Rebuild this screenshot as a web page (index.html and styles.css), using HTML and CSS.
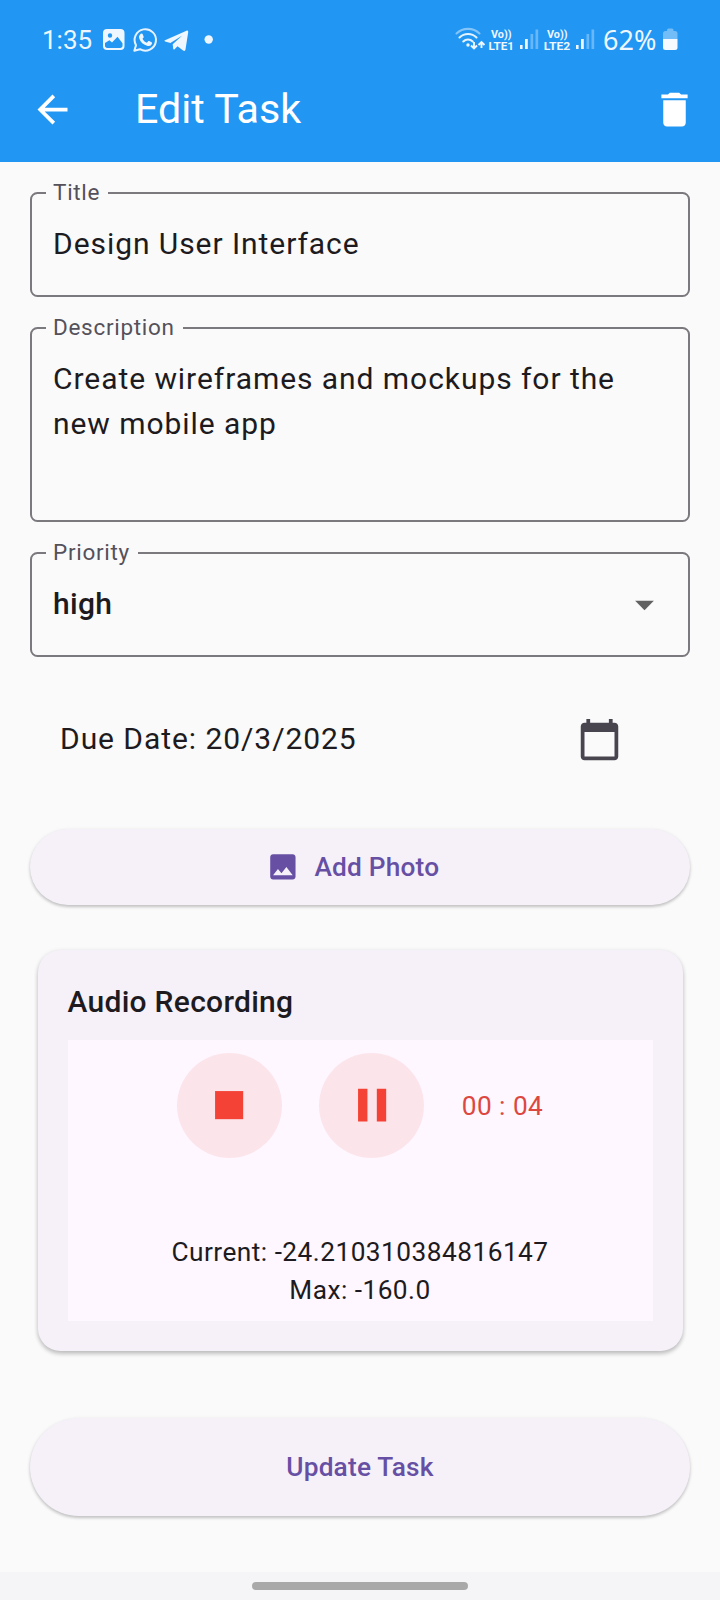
FILE: index.html
```html
<!DOCTYPE html>
<html lang="en">
<head>
<meta charset="utf-8">
<title>Edit Task</title>
<link rel="stylesheet" href="styles.css">
</head>
<body>
<div class="screen">
  <header class="top">
    <div class="status">
      <span class="status-text clock">1:35</span>
      <svg class="notif" width="112" height="28" viewBox="102 26 112 28">
        <path fill="#eef7ff" fill-rule="evenodd" d="M107 29h13.500a4 4 0 0 1 4 4v13a4 4 0 0 1-4 4H107a4 4 0 0 1-4-4V33a4 4 0 0 1 4-4zM105 43v2.800c0 1.300 1 2.200 2.200 2.200h13c1.300 0 2.300-.9 2.300-2.200v-2.600l-5-6.400-5.500 5.700-2.600-2.300zM110 33.300a2.200 2.200 0 1 0 0 4.400 2.200 2.200 0 0 0 0-4.400z"/>
        <path fill="none" stroke="#e6f3ff" stroke-width="2" stroke-linejoin="round" d="M134.300 50.800l1.700-5.600a10.700 10.700 0 1 1 4 4z"/>
        <path fill="#eef7ff" d="M140.800 33.800c.6-.5 1.500-.4 1.800.3l1 2.300c.2.500.1.900-.2 1.300l-.9 1.100c.9 1.900 2.300 3.200 4.300 4l1.200-1.400c.3-.4.7-.5 1.200-.3l2.300 1.100c.6.3.7.7.5 1.300-.6 2-2.300 2.900-4.300 2.400-4.300-1-7.300-3.800-8.500-7.700-.5-1.800.2-3.300 1.600-4.400z"/>
        <path fill="#eef7ff" d="M165 40.300l21.500-9.600c1-.4 1.900.2 1.700 1.500l-2.700 17.300c-.2 1.400-1.300 1.800-2.400 1l-5.600-4.200-2.900 2.900c-.6.500-1.300.3-1.400-.5l-.5-4.500 9.600-8.700-11.900 7.500-5.300-1.600c-.9-.3-.9-.8-.1-1.100z"/>
        <circle cx="208.700" cy="39.500" r="4.200" fill="#eef7ff"/>
      </svg>
      <svg class="signals" width="144" height="28" viewBox="454 26 144 28">
        <g fill="none" stroke="#e6f3ff" stroke-width="2.100" stroke-linecap="round">
          <path opacity=".5" d="M456.500 33.500a16.500 16.500 0 0 1 23 0"/>
          <path d="M459.500 37.500a12 12 0 0 1 17 0M463.300 41.400a6.600 6.600 0 0 1 9.400 0"/>
        </g>
        <circle cx="468" cy="45" r="1.700" fill="#eef7ff"/>
        <path fill="none" stroke="#eef7ff" stroke-width="1.900" d="M474 42v6M471 45.500l3 3 3-3M481.500 48v-6M478.500 45l3-3 3 3"/>
        <g class="net">
          <text x="491" y="38" textLength="20.500" lengthAdjust="spacingAndGlyphs">Vo))</text>
          <text x="488.500" y="50" textLength="25.500" lengthAdjust="spacingAndGlyphs">LTE1</text>
          <text x="547" y="38" textLength="20.500" lengthAdjust="spacingAndGlyphs">Vo))</text>
          <text x="543.800" y="50" textLength="26.500" lengthAdjust="spacingAndGlyphs">LTE2</text>
        </g>
        <path fill="#eef7ff" d="M520 45h2.600v4H520zM525 39h2.800v10H525zM576 45h2.600v4H576zM581 39h2.800v10H581z"/>
        <path fill="#eef7ff" opacity=".35" d="M530.500 34h2.700v15h-2.700zM535.500 29.500h2.700V49h-2.700zM586.500 34h2.700v15h-2.700zM591.500 29.500h2.700V49h-2.700z"/>
      </svg>
      <span class="status-text percent">62%</span>
      <svg width="15" height="28" viewBox="663 26 15 28">
        <path fill="#eef7ff" opacity=".4" d="M663 39v-5.500q0-2.500 2.500-2.500h1.500v-1q0-1.500 1.500-1.500h3.500q1.500 0 1.500 1.500v1h1.500q2.500 0 2.500 2.500V39z"/>
        <path fill="#f4faff" d="M663 39h14.500v8.500q0 2.500-2.500 2.500h-9.500q-2.500 0-2.500-2.500z"/>
      </svg>
    </div>
    <div class="appbar">
      <svg class="icon" viewBox="0 0 24 24"><path fill="#fff" d="M20 11H7.830l5.590-5.590L12 4l-8 8 8 8 1.410-1.410L7.830 13H20v-2z"/></svg>
      <h1 class="appbar-title">Edit Task</h1>
      <svg class="icon" viewBox="0 0 24 24"><path fill="#fff" d="M6 19c0 1.100.9 2 2 2h8c1.100 0 2-.9 2-2V7H6v12zM19 4h-3.500l-1-1h-5l-1 1H5v2h14V4z"/></svg>
    </div>
  </header>

  <main class="form">
    <fieldset class="field">
      <legend class="field-label">Title</legend>
      <div class="field-text">Design User Interface</div>
    </fieldset>
    <fieldset class="field field-tall">
      <legend class="field-label">Description</legend>
      <div class="field-text">Create wireframes and mockups for the new mobile app</div>
    </fieldset>
    <fieldset class="field">
      <legend class="field-label">Priority</legend>
      <div class="field-text field-select">high
        <svg class="icon" viewBox="0 0 24 24"><path fill="#616161" d="M7 10l5 5 5-5z"/></svg>
      </div>
    </fieldset>

    <div class="due">
      <span class="due-text">Due Date: 20/3/2025</span>
      <svg class="icon" viewBox="0 0 24 24"><path fill="#49454f" d="M20 3h-1V1h-2v2H7V1H5v2H4c-1.100 0-2 .9-2 2v16c0 1.100.9 2 2 2h16c1.100 0 2-.9 2-2V5c0-1.100-.9-2-2-2zm0 18H4V8h16v13z"/></svg>
    </div>

    <div class="button button-photo">
      <svg class="icon-small" viewBox="0 0 24 24"><path fill="#6750a4" d="M21 19V5c0-1.100-.9-2-2-2H5c-1.100 0-2 .9-2 2v14c0 1.100.9 2 2 2h14c1.100 0 2-.9 2-2zM8.500 13.500l2.500 3.010L14.500 12l4.500 6H5l3.500-4.500z"/></svg>
      <span>Add Photo</span>
    </div>

    <section class="card">
      <h2 class="card-title">Audio Recording</h2>
      <div class="recorder">
        <div class="controls">
          <span class="round"><svg class="icon-round" viewBox="0 0 24 24"><path fill="#f44336" d="M6 6h12v12H6z"/></svg></span>
          <span class="round"><svg class="icon-round" viewBox="0 0 24 24"><path fill="#f44336" d="M6 19h4V5H6v14zm8-14v14h4V5h-4z"/></svg></span>
          <span class="timer">00 : 04</span>
        </div>
        <div class="levels">Current: -24.210310384816147</div>
        <div class="levels">Max: -160.0</div>
      </div>
    </section>

    <div class="button button-update"><span>Update Task</span></div>
  </main>

  <footer class="navbar"><span class="handle"></span></footer>
</div>
</body>
</html>
```
FILE: styles.css
```css
* { box-sizing: border-box; }

body {
  margin: 0;
  background: #fafafa;
  color: #1d1b20;
  font-family: Roboto, sans-serif;
}

svg { display: block; flex: none; }

.screen {
  display: flex;
  flex-direction: column;
  width: 720px;
  height: 1600px;
  overflow: hidden;
}

/* Status bar and app bar */
.top {
  flex: none;
  height: 162px;
  background: #2196f3;
  color: #fff;
}

.status {
  display: flex;
  align-items: center;
  height: 54px;
  padding: 26px 42px 0 42px;
}

.status-text {
  font-size: 26px;
  line-height: 28px;
  color: #eef7ff;
  white-space: nowrap;
}

.clock { width: 60px; }
.signals { margin-left: auto; }

.percent {
  width: 60px;
  margin-left: 5px;
  font-family: "Noto Sans", sans-serif;
  font-size: 27px;
}

.net {
  fill: #eef7ff;
  font-size: 11.500px;
  font-weight: 700;
}

.appbar {
  display: flex;
  align-items: center;
  height: 108px;
  padding: 3px 23px 0 30px;
}

.appbar-title {
  flex: 1;
  margin: 0 0 2px 60px;
  font-size: 41.250px;
  font-weight: 400;
  line-height: 52px;
}

.icon { width: 45px; height: 45px; }
.icon-small { width: 33.750px; height: 33.750px; }
.icon-round { width: 56.250px; height: 56.250px; }

/* Form */
.form {
  flex: 1;
  padding: 18px 30px 0;
}

.field {
  height: 117px;
  margin: 0 0 18px;
  padding: 0 21px;
  border: 2px solid #7b787e;
  border-radius: 7.500px;
}

.field-tall { height: 207px; }

.field-label {
  margin-left: -7px;
  padding: 0 8px 0 7px;
  height: 26px;
  font-size: 22.500px;
  line-height: 24px;
  letter-spacing: .7px;
  color: #55515a;
}

.field-text {
  padding-top: 15px;
  font-size: 30px;
  line-height: 45px;
  letter-spacing: .94px;
}

.field-select {
  display: flex;
  justify-content: space-between;
  font-weight: 500;
  letter-spacing: .28px;
}

.field-select .icon { margin-top: 1px; }

.due {
  display: flex;
  align-items: center;
  justify-content: space-between;
  height: 153px;
  padding: 0 68px 0 30px;
  margin-top: -12px;
}

.due-text {
  padding-bottom: 2px;
  font-size: 30px;
  line-height: 45px;
  letter-spacing: .94px;
}

.button {
  display: flex;
  align-items: center;
  justify-content: center;
  border-radius: 50px;
  background: #f6f1f9;
  box-shadow: 0 2px 3px rgba(0, 0, 0, .18), 0 1px 4px rgba(0, 0, 0, .08);
  color: #6750a4;
  font-size: 26.250px;
  font-weight: 500;
  letter-spacing: .19px;
}

.button-photo {
  gap: 15px;
  height: 76px;
  padding-right: 15px;
  margin-top: 13px;
}

.button-update { height: 98px; }

/* Recorder card */
.card {
  height: 401px;
  margin: 45px 7.500px 67px;
  padding: 29px 30px 30px;
  border-radius: 22.500px;
  background: #f6f1f9;
  box-shadow: 0 3px 4px rgba(0, 0, 0, .19), 0 1px 5px rgba(0, 0, 0, .1);
}

.card-title {
  margin: 0 0 16px;
  font-size: 30px;
  font-weight: 500;
  line-height: 45px;
  letter-spacing: .28px;
}

.recorder {
  height: 281px;
  padding-top: 13px;
  background: #fef7ff;
}

.controls {
  display: flex;
  align-items: center;
  justify-content: center;
  gap: 37.500px;
  height: 105px;
  margin-bottom: 76px;
}

.round {
  display: flex;
  align-items: center;
  justify-content: center;
  width: 105px;
  height: 105px;
  border-radius: 50%;
  background: #fce5ea;
}

.timer {
  font-size: 26.250px;
  letter-spacing: .47px;
  color: #dc4840;
}

.levels {
  font-size: 26.250px;
  line-height: 37.500px;
  letter-spacing: .47px;
  text-align: center;
}

/* Gesture bar */
.navbar {
  flex: none;
  display: flex;
  justify-content: center;
  height: 28px;
  padding-top: 10px;
  background: #f5f5f7;
}

.handle {
  width: 216px;
  height: 8px;
  border-radius: 4px;
  background: #a9a9a9;
}
```
